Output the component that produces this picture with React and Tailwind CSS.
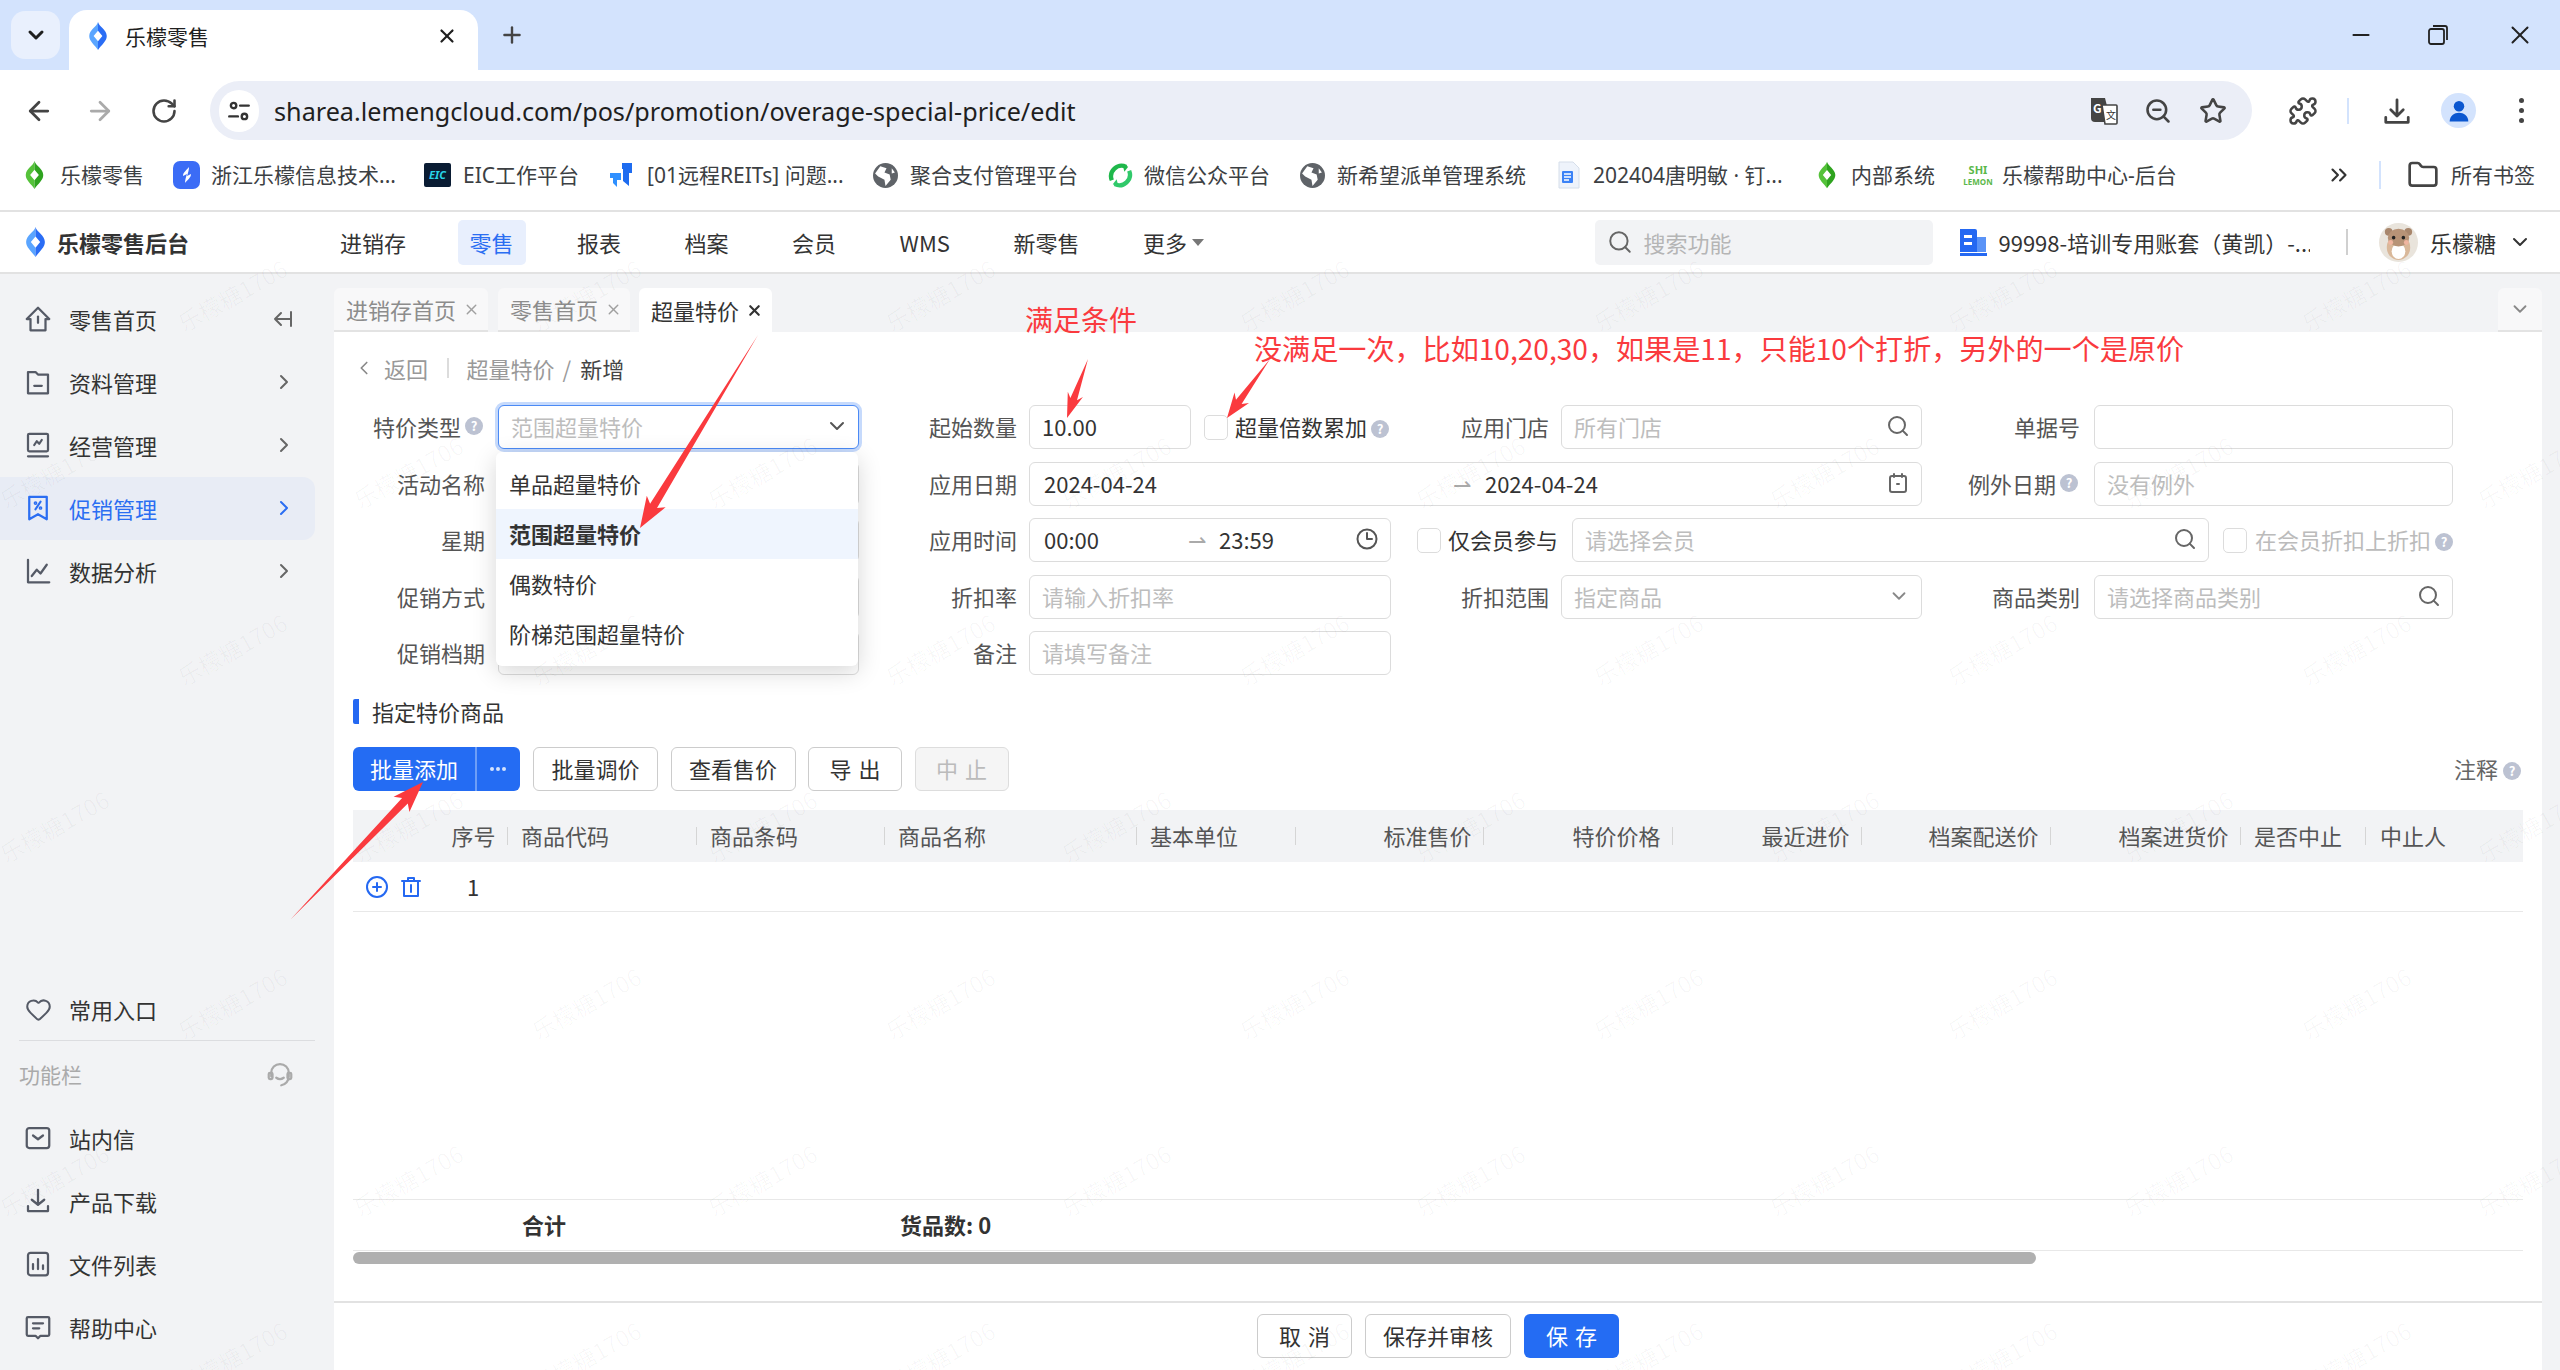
import React from 'react';
import { ArrowLeft, ArrowRight, RotateCw, ZoomOut, Star, Puzzle, ChevronRight, ChevronDown, ChevronLeft, Search, Heart, Plus, X, Folder, ChevronsRight, Minus } from 'lucide-react';

const Logo = ({ className, c1 = '#5aa5ff', c2 = '#2a6df5' }) => (
  <svg viewBox="0 0 24 32" className={className}>
    <path d="M12 0C11 5 2 9 2 16c0 6 6 10 10 16V22l-5-6 5-6z" fill={c1} />
    <path d="M12 0c1 5 10 9 10 16 0 6-6 10-10 16V22l5-6-5-6z" fill={c2} />
  </svg>
);
const Globe = ({ className }) => (
  <svg viewBox="0 0 24 24" className={className}>
    <circle cx="12" cy="12" r="12" fill="#5f6368" />
    <path d="M7 3l6 2-2 4 5 2 1 5-5 6-1-6-6-3-3-3zM18 5l3 4-3 1z" fill="#fff" />
  </svg>
);
const Bm = ({ w, gap, icon, children }) => (
  <div className={`flex items-center shrink-0 ${w} ${gap}`}>
    {icon}
    <span className="text-[21px] leading-[28px] text-[#3c4043] whitespace-nowrap">{children}</span>
  </div>
);
const Nav = ({ children, active }) => (
  <div className={`h-[45px] px-[12px] rounded-[5px] flex items-center text-[22px] leading-[30px] ${active ? 'bg-[#e8effd] text-[#2b6ef2]' : 'text-[#333]'}`}>{children}</div>
);
const S = ({ children, className = 'w-[30px] h-[30px]', c = '#555a66', sw = 1.8 }) => (
  <svg viewBox="0 0 24 24" fill="none" stroke={c} strokeWidth={sw} strokeLinecap="round" strokeLinejoin="round" className={className}>{children}</svg>
);
const Side = ({ icon, label, chevron = true, active, extra }) => (
  <div className={`h-[63px] w-[315px] rounded-r-[12px] flex items-center pl-[23px] pr-[19px] pb-[2px] ${active ? 'bg-[#e8ecf5]' : ''}`}>
    <span className="w-[30px] flex justify-center">{icon}</span>
    <span className={`ml-[16px] text-[22px] leading-[30px] ${active ? 'text-[#2b6ef2]' : 'text-[#333]'}`}>{label}</span>
    {chevron && <ChevronRight className="ml-auto" size={24} color={active ? '#2b6ef2' : '#666'} strokeWidth={2} />}
    {extra}
  </div>
);
const Help = () => (
  <span className="inline-flex shrink-0 w-[18px] h-[18px] rounded-full bg-[#bcc2d2] text-white text-[13px] leading-[18px] justify-center font-bold">?</span>
);
const Label = ({ w = 'w-[158px]', help, children }) => (
  <div className={`${w} shrink-0 flex items-center justify-end pb-[2px] text-[22px] leading-[30px] text-[#555] whitespace-nowrap`}>
    {children}
    {help && <span className="ml-[4px] mr-[2px] flex"><Help /></span>}
  </div>
);
const Box = ({ className = '', children, ph, icon }) => (
  <div className={`h-[44px] border-[1.5px] border-[#dcdcdc] rounded-[6px] bg-white flex items-center pl-[12px] pr-[11px] pb-[2px] text-[22px] leading-[30px] shrink-0 ${className}`}>
    {ph && <span className="text-[#bdbdbd]">{ph}</span>}
    {children}
    {icon && <span className="ml-auto flex">{icon}</span>}
  </div>
);
const Check = ({ className = '' }) => <span className={`inline-block w-[24px] h-[25px] shrink-0 border-[1.5px] border-[#dcdcdc] rounded-[5px] bg-white ${className}`} />;
const SearchI = () => <Search size={24} color="#666" strokeWidth={2} />;
const Btn = ({ w, tracked, disabled, children }) => (
  <div className={`${w} h-[44px] rounded-[6px] border-[1.5px] pb-[2px] flex items-center justify-center text-[22px] leading-[30px] ${disabled ? 'bg-[#f5f5f5] border-[#dddddd] text-[#bbb]' : 'bg-white border-[#cccccc] text-[#333]'}`}>
    <span className={tracked ? 'tracking-[7px] pl-[7px]' : ''}>{children}</span>
  </div>
);
const Th = ({ right, pl = 'pl-[13px]', children }) => (
  <div className="flex items-center h-full">
    <span className={`flex-1 whitespace-nowrap pb-[2px] ${right ? 'text-right pr-[11px]' : pl}`}>{children}</span>
    <span className="w-[1.5px] h-[18px] bg-[#d5d5d5] shrink-0" />
  </div>
);
const Tab = ({ w, active, children }) => (
  <div className={`${w} h-[44px] rounded-t-[6px] flex items-center pl-[12px] text-[22px] leading-[30px] ${active ? 'bg-white text-[#333]' : 'bg-[#f8f8f9] text-[#8c8c8c] border-b-[2px] border-[#e3e3e3]'}`}>
    <span>{children}</span>
    <X className="ml-[7px]" size={17} strokeWidth={active ? 3 : 2} color={active ? '#333' : '#a0a0a0'} />
  </div>
);
const Arrow = ({ x1, y1, x2, y2, L = 30, hw = 11, sw = 4.5 }) => {
  const dx = x2 - x1, dy = y2 - y1, len = Math.hypot(dx, dy);
  const ux = dx / len, uy = dy / len, nx = -uy, ny = ux;
  const bx = x2 - ux * L, by = y2 - uy * L;
  const bx2 = x2 - ux * (L + 5), by2 = y2 - uy * (L + 5);
  const pts = [
    [x1, y1],
    [bx + nx * sw, by + ny * sw],
    [bx2 + nx * hw, by2 + ny * hw],
    [x2, y2],
    [bx2 - nx * hw, by2 - ny * hw],
    [bx - nx * sw, by - ny * sw],
  ].map((p) => p.map((v) => v.toFixed(1)).join(',')).join(' ');
  return <polygon points={pts} fill="#fa3a3e" />;
};
const marks = [];
for (let r = 0; r < 7; r++) {
  for (let c = 0; c < 8; c++) {
    marks.push({ x: (r % 2 === 0 ? 178 : 0) + 354 * c, y: 177 * r });
  }
}

export default function App() {
  return (
    <div className="relative w-[2560px] h-[1370px] overflow-hidden flex flex-col bg-white font-['Noto_Sans_CJK_SC',sans-serif]">
      {/* tab strip */}
      <div className="h-[70px] bg-[#d3e3fd] flex items-end shrink-0 relative">
        <div className="absolute left-[11px] top-[11px] w-[49px] h-[48px] rounded-[14px] bg-[#e9f0fd] flex items-center justify-center"><ChevronDown size={24} strokeWidth={3} color="#1f1f1f" /></div>
        <div className="absolute left-[69px] top-[10px] w-[409px] h-[62px] bg-white rounded-t-[18px] flex items-center pl-[18px] pb-[10px] z-[1]">
          <Logo className="w-[22px] h-[28px]" />
          <span className="ml-[16px] text-[21px] leading-[28px] text-[#1f1f1f]">乐檬零售</span>
          <X className="ml-auto mr-[20px]" size={22} strokeWidth={2.4} color="#1f1f1f" />
        </div>
        <Plus className="absolute left-[499px] top-[22px]" size={26} color="#444" strokeWidth={2.2} />
        <Minus className="absolute left-[2348px] top-[22px]" size={26} color="#222" strokeWidth={1.8} />
        <svg viewBox="0 0 24 24" fill="none" stroke="#222" strokeWidth="1.8" className="absolute left-[2426px] top-[23px] w-[24px] h-[24px]"><rect x="3" y="6" width="15" height="15" rx="2" /><path d="M7 3h12a2 2 0 0 1 2 2v12" /></svg>
        <X className="absolute left-[2505px] top-[20px]" size={30} color="#222" strokeWidth={1.6} />
      </div>
      {/* toolbar */}
      <div className="h-[70px] bg-white rounded-t-[16px] flex items-center shrink-0 relative pt-[11px]">
        <ArrowLeft className="ml-[24px]" size={30} color="#444" strokeWidth={2.2} />
        <ArrowRight className="ml-[31px]" size={30} color="#aaa" strokeWidth={2.2} />
        <RotateCw className="ml-[35px]" size={28} color="#444" strokeWidth={2.2} />
        <div className="ml-[32px] w-[2042px] h-[59px] rounded-full bg-[#ebeef7] flex items-center pl-[9px]">
          <span className="w-[40px] h-[42px] rounded-full bg-white flex items-center justify-center">
            <S className="w-[26px] h-[26px]" c="#333" sw={2.2}><circle cx="7" cy="7" r="2.5" /><path d="M13 7h8M3 17h8" /><circle cx="17" cy="17" r="2.5" /></S>
          </span>
          <span className="ml-[15px] font-['Noto_Sans',sans-serif] text-[25.2px] leading-[34px] text-[#1f1f1f] whitespace-nowrap">sharea.lemengcloud.com/pos/promotion/overage-special-price/edit</span>
          <svg viewBox="0 0 30 30" className="ml-auto mr-[6px] w-[30px] h-[30px]">
            <path d="M2 2h14l6 24H6a4 4 0 0 1-4-4z" fill="#444" />
            <path d="M13 9h14a1 1 0 0 1 1 1v17a1 1 0 0 1-1 1H16z" fill="#fff" stroke="#444" strokeWidth="1.6" />
            <text x="4" y="17" fontSize="12" fontWeight="700" fill="#fff">G</text>
            <text x="17" y="23" fontSize="10" fill="#333">文</text>
          </svg>
          <ZoomOut className="ml-[19px]" size={28} color="#444" strokeWidth={2.2} />
          <Star className="ml-[27px] mr-[25px]" size={28} color="#444" strokeWidth={2.2} />
        </div>
        <Puzzle className="ml-[36px]" size={30} color="#444" strokeWidth={2} />
        <span className="ml-[29px] w-[2px] h-[26px] bg-[#d3e3fd]" />
        <S className="ml-[33px] w-[30px] h-[30px]" c="#444" sw={2.2}><path d="M12 3v13M7 11l5 5 5-5M3 17v4h18v-4" /></S>
        <span className="ml-[29px] w-[35px] h-[35px] rounded-full bg-[#d3e3fd] flex items-center justify-center">
          <svg viewBox="0 0 24 24" className="w-[28px] h-[28px]"><circle cx="12" cy="8" r="4.5" fill="#0b57d0" /><path d="M4 21c0-5 4-7.5 8-7.5s8 2.500 8 7.500z" fill="#0b57d0" /></svg>
        </span>
        <span className="ml-[43px] flex flex-col gap-[5px]">
          <i className="block w-[5px] h-[5px] rounded-full bg-[#444]" /><i className="block w-[5px] h-[5px] rounded-full bg-[#444]" /><i className="block w-[5px] h-[5px] rounded-full bg-[#444]" />
        </span>
      </div>
      {/* bookmarks */}
      <div className="h-[72px] shrink-0 flex items-center pl-[24px] border-b-[2px] border-[#e2e2e2] font-['Noto_Sans','Noto_Sans_CJK_SC',sans-serif] relative">
        <Bm w="w-[149px]" gap="gap-[15px]" icon={<Logo className="w-[21px] h-[28px]" c1="#55c23a" c2="#2fa31f" />}>乐檬零售</Bm>
        <Bm w="w-[251px]" gap="gap-[11px]" icon={<span className="w-[27px] h-[28px] rounded-[7px] bg-[#3b6cf6] flex items-center justify-center"><svg viewBox="0 0 12 16" className="w-[12px] h-[16px]"><path d="M8 0C6 3 2 5 2 9l4-2C5 10 4 13 4 16c2-3 6-5 6-9L6 9c1-3 2-6 2-9z" fill="#fff" /></svg></span>}>浙江乐檬信息技术...</Bm>
        <Bm w="w-[184px]" gap="gap-[12px]" icon={<span className="w-[27px] h-[24px] bg-[#0a1c33] rounded-[2px] flex items-center justify-center text-[#27d3e8] text-[11px] leading-[12px] font-bold italic">EIC</span>}>EIC工作平台</Bm>
        <Bm w="w-[265px]" gap="gap-[13px]" icon={<svg viewBox="0 0 26 26" className="w-[26px] h-[26px]"><path d="M14 1h10v10h-3v13l-6-5V7h-1z" fill="#1e6cf0" /><path d="M2 11h11v7H9v7l-4-4v-5H2z" fill="#2f90ff" /></svg>}>[01远程REITs] 问题...</Bm>
        <Bm w="w-[235px]" gap="gap-[12px]" icon={<Globe className="w-[25px] h-[25px]" />}>聚合支付管理平台</Bm>
        <Bm w="w-[192px]" gap="gap-[11px]" icon={<svg viewBox="0 0 26 26" fill="none" strokeWidth="4.500" className="w-[25px] h-[25px]"><path d="M4 18A11 11 0 0 1 19 4" stroke="#1fb84b" /><path d="M22 8a11 11 0 0 1-15 14" stroke="#30c96a" /><path d="M15 1l6 3-4 5z" fill="#1fb84b" /><path d="M11 25l-6-3 4-5z" fill="#30c96a" /></svg>}>微信公众平台</Bm>
        <Bm w="w-[258px]" gap="gap-[12px]" icon={<Globe className="w-[25px] h-[25px]" />}>新希望派单管理系统</Bm>
        <Bm w="w-[259px]" gap="gap-[13px]" icon={<svg viewBox="0 0 22 28" className="w-[22px] h-[28px]"><path d="M1 1h14l6 6v20H1z" fill="#eef3fb" stroke="#d5deea" /><rect x="4" y="10" width="11" height="12" rx="1" fill="#3b82f6" /><path d="M6 13h7M6 16h7M6 19h5" stroke="#fff" strokeWidth="1.500" /></svg>}>202404唐明敏 · 钉...</Bm>
        <Bm w="w-[149px]" gap="gap-[14px]" icon={<Logo className="w-[20px] h-[28px]" c1="#55c23a" c2="#2fa31f" />}>内部系统</Bm>
        <Bm w="w-[260px]" gap="gap-[12px]" icon={<span className="w-[24px] h-[26px] flex flex-col items-center text-[#5bb84a] text-[8px] leading-[10px] font-bold"><span className="text-[11px] leading-[15px]">SHI</span><span>LEMON</span></span>}>乐檬帮助中心-后台</Bm>
        <ChevronsRight className="absolute left-[2326px] top-[22px]" size={26} color="#333" strokeWidth={2} />
        <span className="absolute left-[2379px] top-[21px] w-[2px] h-[28px] bg-[#d3e3fd]" />
        <Folder className="absolute left-[2407px] top-[19px]" size={32} color="#444" strokeWidth={2} />
        <span className="absolute left-[2451px] top-[21px] text-[21px] leading-[28px] text-[#3c4043]">所有书签</span>
      </div>
      {/* app header */}
      <div className="h-[62px] shrink-0 flex items-center border-b-[2px] border-[#e2e2e2] bg-white">
        <div className="w-[328px] shrink-0 flex items-center pl-[24px]">
          <Logo className="w-[23px] h-[30px]" />
          <span className="ml-[10px] text-[22px] leading-[30px] font-bold text-[#333]">乐檬零售后台</span>
        </div>
        <div className="flex items-center gap-[39.5px]">
          <Nav>进销存</Nav><Nav active>零售</Nav><Nav>报表</Nav><Nav>档案</Nav><Nav>会员</Nav><Nav>WMS</Nav><Nav>新零售</Nav>
          <Nav>更多<span className="ml-[5px] w-0 h-0 border-x-[6px] border-x-transparent border-t-[7px] border-t-[#777]" /></Nav>
        </div>
        <div className="ml-auto flex items-center pr-[28px]">
          <div className="w-[338px] h-[45px] rounded-[5px] bg-[#f2f3f5] flex items-center pl-[12px]">
            <Search size={26} color="#666" strokeWidth={1.8} />
            <span className="ml-[10px] text-[22px] leading-[30px] text-[#b5b5b5]">搜索功能</span>
          </div>
          <svg viewBox="0 0 28 30" className="ml-[26px] w-[28px] h-[30px]"><path d="M1 2h15a2 2 0 0 1 2 2v21H1z" fill="#2468f2" /><path d="M18 10h9v15h-9z" fill="#5a93f7" /><rect x="1" y="26" width="27" height="3" fill="#2468f2" /><path d="M5 8h8v3H5zM5 15h8v3H5z" fill="#fff" /></svg>
          <span className="ml-[11px] w-[312px] text-[22px] leading-[30px] text-[#333] whitespace-nowrap overflow-hidden">99998-培训专用账套（黄凯）-...</span>
          <span className="ml-[36px] w-[1.5px] h-[26px] bg-[#d0d0d0]" />
          <svg viewBox="0 0 40 40" className="ml-[31px] w-[39px] h-[39px]">
            <circle cx="20" cy="20" r="20" fill="#e9e4dc" />
            <ellipse cx="20" cy="25" rx="12" ry="13" fill="#d9b89a" />
            <ellipse cx="20" cy="29" rx="7" ry="8" fill="#fff" />
            <circle cx="10" cy="9" r="4" fill="#a8866c" /><circle cx="30" cy="9" r="4" fill="#a8866c" />
            <ellipse cx="20" cy="15" rx="11" ry="9" fill="#b79377" />
            <circle cx="15" cy="15" r="1.800" fill="#222" /><circle cx="25" cy="15" r="1.800" fill="#222" />
            <circle cx="12" cy="20" r="2.500" fill="#f0b5a0" /><circle cx="28" cy="20" r="2.500" fill="#f0b5a0" />
          </svg>
          <span className="ml-[12px] text-[22px] leading-[30px] text-[#333]">乐檬糖</span>
          <ChevronDown className="ml-[12px]" size={24} color="#333" strokeWidth={2} />
        </div>
      </div>
      {/* body */}
      <div className="flex-1 flex min-h-0 bg-[#f2f3f5]">
        <aside className="w-[334px] shrink-0 flex flex-col justify-between pt-[14px] pb-[11px]">
          <div>
            <Side label="零售首页" chevron={false} icon={<S><path d="M12 3 3 12h3v9h12v-9h3z" /><path d="M12 10v5" /></S>} extra={<S className="ml-auto w-[24px] h-[24px] mr-[1px]" c="#666" sw={2}><path d="M20 5v14M20 12H4M10 6l-6 6 6 6" /></S>} />
            <Side label="资料管理" icon={<S><path d="M4 4h6l2 2h8v15H4z" /><path d="M9 15h6" /></S>} />
            <Side label="经营管理" icon={<S><rect x="4" y="3" width="16" height="14" rx="1" /><path d="M4 21h16M9 12l2-3 2 2 2-3" /></S>} />
            <Side active label="促销管理" icon={<S c="#2b6ef2"><path d="M5 3h14v18l-7-4-7 4z" /><path d="m14 7-4 6" /><circle cx="10" cy="8" r=".6" /><circle cx="14" cy="12" r=".6" /></S>} />
            <Side label="数据分析" icon={<S><path d="M4 3v18h17" /><path d="m7 16 4-5 3 3 5-7" /></S>} />
          </div>
          <div>
            <Side label="常用入口" chevron={false} icon={<Heart size={27} color="#555a66" strokeWidth={1.8} />} />
            <div className="ml-[19px] w-[296px] h-[1.5px] bg-[#dcdde0] mt-[-2px]" />
            <div className="h-[66px] w-[315px] flex items-center pl-[19px] pr-[20px] text-[21px] leading-[28px] text-[#aaa]">
              功能栏
              <S className="ml-auto w-[30px] h-[30px]" c="#aaa"><path d="M5 14v-3a7 7 0 0 1 14 0v3a7 7 0 0 1-6 7" /><rect x="3" y="11" width="3" height="5" rx="1" /><rect x="18" y="11" width="3" height="5" rx="1" /><path d="M9 15c2 1.500 4 1.500 6 0" /></S>
            </div>
            <Side label="站内信" chevron={false} icon={<S><rect x="3" y="4" width="18" height="16" rx="2" /><path d="m8 10 4 3 4-3" /></S>} />
            <Side label="产品下载" chevron={false} icon={<S><path d="M12 3v12M7 11l5 4 5-4M4 16v4h16v-4" /></S>} />
            <Side label="文件列表" chevron={false} icon={<S><rect x="4" y="3" width="16" height="18" rx="2" /><path d="M8 16v-4M12 16V8M16 16v-3" /></S>} />
            <Side label="帮助中心" chevron={false} icon={<S><path d="M3 5a1 1 0 0 1 1-1h16a1 1 0 0 1 1 1v13a1 1 0 0 1-1 1h-6l-2 2-2-2H4a1 1 0 0 1-1-1z" /><path d="M8 9h8M8 13h5" /></S>} />
          </div>
        </aside>
        <div className="flex-1 flex flex-col min-w-0 pr-[18px]">
          <div className="h-[58px] shrink-0 flex items-end">
            <Tab w="w-[154px]">进销存首页</Tab>
            <div className="ml-[10px]"><Tab w="w-[132px]">零售首页</Tab></div>
            <div className="ml-[9px]"><Tab w="w-[133px]" active>超量特价</Tab></div>
            <div className="ml-auto w-[44px] h-[44px] rounded-t-[6px] bg-[#f8f8f9] border-b-[2px] border-[#e3e3e3] flex items-center justify-center"><ChevronDown size={22} color="#888" strokeWidth={2} /></div>
          </div>
          <div className="flex-1 bg-white flex flex-col min-h-0 pt-[13px]">
            <div className="h-[48px] shrink-0 flex items-center pl-[19px] pb-[2px] text-[22px] leading-[30px]">
              <ChevronLeft size={22} color="#888" strokeWidth={1.8} />
              <span className="ml-[9px] text-[#999]">返回</span>
              <span className="ml-[19px] w-[1.5px] h-[20px] bg-[#dcdcdc]" />
              <span className="ml-[18px] text-[#999]">超量特价</span>
              <span className="ml-[8px] text-[#999]">/</span>
              <span className="ml-[9px] text-[#444]">新增</span>
            </div>
            <div className="mt-[12px] shrink-0 pl-[19px] flex flex-col gap-[12.5px]">
              <div className="h-[44px] flex items-center relative">
                <Label w="w-[132px]" help>特价类型</Label>
                <div className="ml-[13px] w-[361px] relative shrink-0">
                  <Box ph="范围超量特价" className="w-[361px] !border-[#4b8af5] ring-[3px] ring-[#c6dafc] !pr-[9px]" icon={<ChevronDown size={24} color="#555" strokeWidth={2} />} />
                  <div className="absolute left-[-2px] top-[47px] w-[362px] h-[214px] bg-white rounded-[6px] shadow-[0_6px_24px_rgba(0,0,0,0.16)] z-10 py-[7px] text-[22px] leading-[30px] text-[#333]">
                    <div className="h-[50px] flex items-center pl-[13px] pb-[2px]">单品超量特价</div>
                    <div className="h-[50px] flex items-center pl-[13px] pb-[2px] bg-[#eff5fe] font-bold">范围超量特价</div>
                    <div className="h-[50px] flex items-center pl-[13px] pb-[2px]">偶数特价</div>
                    <div className="h-[50px] flex items-center pl-[13px] pb-[2px]">阶梯范围超量特价</div>
                  </div>
                </div>
                <Label>起始数量</Label>
                <Box className="ml-[12px] w-[162px] text-[#333]">10.00</Box>
                <Check className="ml-[13px]" />
                <span className="ml-[7px] pb-[2px] text-[22px] leading-[30px] text-[#333] whitespace-nowrap">超量倍数累加</span>
                <span className="ml-[4px]"><Help /></span>
                <div className="ml-[71px] flex items-center">
                  <Label w="w-[89px]">应用门店</Label>
                  <Box ph="所有门店" className="ml-[12px] w-[361px]" icon={<SearchI />} />
                  <Label>单据号</Label>
                  <Box className="ml-[14px] w-[359px]" />
                </div>
              </div>
              <div className="h-[44px] flex items-center">
                <Label w="w-[132px]">活动名称</Label>
                <Box className="ml-[13px] w-[361px]" />
                <Label>应用日期</Label>
                <Box className="ml-[12px] w-[893px] text-[#333]" icon={<S className="w-[24px] h-[26px]" c="#666" sw={2}><rect x="4" y="5" width="16" height="16" rx="2" /><path d="M8 3v3M16 3v3M11 13h2" /></S>}>
                  <span className="ml-[2px]">2024-04-24</span>
                  <span className="ml-[296px] text-[#aaa] w-[18px]">⇀</span>
                  <span className="ml-[14px]">2024-04-24</span>
                </Box>
                <Label help>例外日期</Label>
                <Box ph="没有例外" className="ml-[14px] w-[359px]" />
              </div>
              <div className="h-[44px] flex items-center">
                <Label w="w-[132px]">星期</Label>
                <Box className="ml-[13px] w-[361px]" />
                <Label>应用时间</Label>
                <Box className="ml-[12px] w-[362px] text-[#333]" icon={<S className="w-[24px] h-[24px]" c="#555" sw={2}><circle cx="12" cy="12" r="9.500" /><path d="M12 6v6h5" /></S>}>
                  <span className="ml-[2px] w-[144px]">00:00</span>
                  <span className="text-[#aaa] w-[31px]">⇀</span>
                  <span>23:59</span>
                </Box>
                <Check className="ml-[26px]" />
                <span className="ml-[7px] pb-[2px] text-[22px] leading-[30px] text-[#333] whitespace-nowrap w-[110px]">仅会员参与</span>
                <Box ph="请选择会员" className="ml-[14px] w-[637px]" icon={<SearchI />} />
                <Check className="ml-[14px]" />
                <span className="ml-[8px] pb-[2px] text-[22px] leading-[30px] text-[#bbb] whitespace-nowrap">在会员折扣上折扣</span>
                <span className="ml-[4px]"><Help /></span>
              </div>
              <div className="h-[44px] flex items-center">
                <Label w="w-[132px]">促销方式</Label>
                <Box className="ml-[13px] w-[361px]" />
                <Label>折扣率</Label>
                <Box ph="请输入折扣率" className="ml-[12px] w-[362px]" />
                <Label>折扣范围</Label>
                <Box ph="指定商品" className="ml-[12px] w-[361px]" icon={<ChevronDown size={22} color="#888" strokeWidth={2} />} />
                <Label>商品类别</Label>
                <Box ph="请选择商品类别" className="ml-[14px] w-[359px]" icon={<SearchI />} />
              </div>
              <div className="h-[44px] flex items-center">
                <Label w="w-[132px]">促销档期</Label>
                <Box className="ml-[13px] w-[361px]" />
                <Label>备注</Label>
                <Box ph="请填写备注" className="ml-[12px] w-[362px]" />
              </div>
            </div>
            <div className="mt-[24px] h-[25px] shrink-0 ml-[19px] pl-[13px] pb-[2px] border-l-[6px] border-[#2468f2] rounded-l-[2px] flex items-center text-[22px] leading-[30px] text-[#333]">指定特价商品</div>
            <div className="mt-[23px] shrink-0 mx-[19px] flex items-center">
              <div className="w-[167px] h-[44px] rounded-[6px] bg-[#246cf3] flex items-center text-white text-[22px] leading-[30px]">
                <span className="w-[122px] text-center pb-[2px]">批量添加</span>
                <span className="w-[1.5px] h-full bg-[#6d9ef7]" />
                <span className="flex-1 flex justify-center gap-[2px]">
                  <i className="block w-[4px] h-[4px] rounded-full bg-[#d5e3fd]" /><i className="block w-[4px] h-[4px] rounded-full bg-[#d5e3fd]" /><i className="block w-[4px] h-[4px] rounded-full bg-[#d5e3fd]" />
                </span>
              </div>
              <div className="ml-[13px] flex gap-[12.5px]">
                <Btn w="w-[125px]">批量调价</Btn>
                <Btn w="w-[125px]">查看售价</Btn>
                <Btn w="w-[94px]" tracked>导出</Btn>
                <Btn w="w-[94px]" tracked disabled>中止</Btn>
              </div>
              <span className="ml-auto pb-[2px] text-[22px] leading-[30px] text-[#666]">注释</span>
              <span className="ml-[5px] mr-[2px]"><Help /></span>
            </div>
            <div className="mt-[19px] shrink-0 mx-[19px]">
              <div className="h-[52px] bg-[#f2f3f5] grid grid-cols-[155px_189px_188px_252px_159px_188px_189px_189px_189px_190px_125px_157px] text-[22px] leading-[30px] text-[#555]">
                <Th right>序号</Th><Th>商品代码</Th><Th>商品条码</Th><Th>商品名称</Th><Th>基本单位</Th>
                <Th right>标准售价</Th><Th right>特价价格</Th><Th right>最近进价</Th><Th right>档案配送价</Th><Th right>档案进货价</Th>
                <Th>是否中止</Th><div className="flex items-center pl-[14px] pb-[2px]">中止人</div>
              </div>
              <div className="h-[50px] border-b-[1.5px] border-[#e8e8e8] flex items-center pl-[12px]">
                <S className="w-[24px] h-[24px]" c="#2468f2" sw={2}><circle cx="12" cy="12" r="10" /><path d="M12 8v8M8 12h8" /></S>
                <S className="ml-[10px] w-[24px] h-[24px]" c="#2468f2" sw={2}><path d="M3 6h18M9 6V3h6v3M5 6h14v15H5zM12 10v7" /></S>
                <span className="ml-[44px] pb-[2px] text-[22px] leading-[30px] text-[#333]">1</span>
              </div>
            </div>
            <div className="flex-1 min-h-0" />
            <div className="shrink-0 mx-[19px] h-[52px] pb-[2px] border-y-[1.5px] border-[#e8e8e8] flex items-center text-[22px] leading-[30px] font-bold text-[#333]">
              <span className="ml-[169px]">合计</span>
              <span className="ml-[334px]">货品数: 0</span>
            </div>
            <div className="shrink-0 ml-[19px] w-[1683px] h-[12px] mt-[1px] rounded-full bg-[#b0b0b0]" />
            <div className="h-[37px] shrink-0" />
            <div className="h-[69px] shrink-0 border-t-[2px] border-[#e2e2e2] pt-[11px] flex gap-[13px] pl-[923px]">
              <Btn w="w-[95px]" tracked>取消</Btn>
              <Btn w="w-[146px]">保存并审核</Btn>
              <div className="w-[95px] h-[44px] rounded-[6px] bg-[#246cf3] text-white flex items-center justify-center pb-[2px] text-[22px] leading-[30px]"><span className="tracking-[7px] pl-[7px]">保存</span></div>
            </div>
          </div>
        </div>
      </div>
      {/* watermark */}
      <div className="absolute left-0 right-0 top-[262px] bottom-0 overflow-hidden pointer-events-none z-20">
        {marks.map((m, i) => (
          <span key={i} className="absolute w-[130px] text-center whitespace-nowrap text-[23px] leading-[32px] text-[rgba(0,0,0,0.03)] -rotate-[29deg]" style={{ left: m.x - 11, top: m.y + 17 }}>乐檬糖1706</span>
        ))}
      </div>
      {/* annotations */}
      <svg viewBox="0 0 2560 1370" className="absolute inset-0 w-[2560px] h-[1370px] pointer-events-none z-30">
        <Arrow x1={1088} y1={359} x2={1067} y2={418} L={20} hw={8} sw={3.5} />
        <Arrow x1={1270} y1={359} x2={1227} y2={418} L={20} hw={9} sw={3.5} />
        <Arrow x1={758} y1={335} x2={640} y2={528} L={26} hw={11} sw={4} />
        <Arrow x1={291} y1={919} x2={423} y2={782} L={26} hw={11} sw={4} />
      </svg>
      <span className="absolute left-[1025px] top-[297px] z-30 text-[28px] leading-[44px] text-[#fa3a3e] whitespace-nowrap">满足条件</span>
      <span className="absolute left-[1254px] top-[326px] z-30 text-[28.1px] leading-[44px] text-[#fa3a3e] whitespace-nowrap">没满足一次，比如10,20,30，如果是11，只能10个打折，另外的一个是原价</span>
    </div>
  );
}
